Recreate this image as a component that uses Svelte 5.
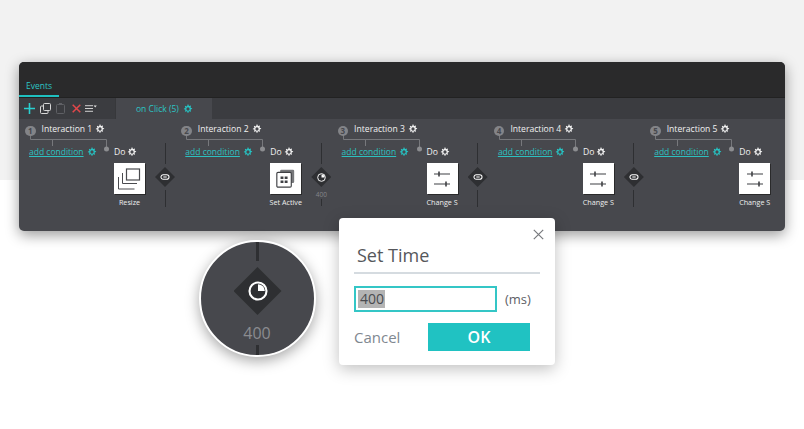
<script>
  const interactions = [
    { n: 1, tile: 'resize', label: 'Resize', link: 'link' },
    { n: 2, tile: 'active', label: 'Set Active', link: 'clock' },
    { n: 3, tile: 'sliders', label: 'Change S', link: 'link' },
    { n: 4, tile: 'sliders', label: 'Change S', link: 'link' },
    { n: 5, tile: 'sliders', label: 'Change S', link: null }
  ];
  const gearPath = 'M5 .6h1l.3 1.3.9.4 1.1-.7.7.7-.7 1.1.4.9 1.3.3v1l-1.3.3-.4.9.7 1.1-.7.7-1.1-.7-.9.4-.3 1.3H5l-.3-1.3-.9-.4-1.1.7-.7-.7.7-1.1-.4-.9L1 6V5l1.3-.3.4-.9-.7-1.1.7-.7 1.1.7.9-.4z';
</script>

{#snippet gear(cls)}
  <svg class="gear {cls}" viewBox="0 0 11 11" aria-hidden="true">
    <path fill-rule="evenodd" d="{gearPath} M5.5 3.700a1.800 1.800 0 1 0 0 3.600 1.800 1.800 0 0 0 0-3.600z" />
  </svg>
{/snippet}

{#snippet clock(size)}
  <svg width={size} height={size} viewBox="0 0 16 16" aria-hidden="true">
    <circle cx="8" cy="8" r="6.800" fill="none" stroke="#fff" stroke-width="1.700" />
    <path d="M8 8V2.500A5.500 5.500 0 0 1 13.500 8z" fill="#fff" />
  </svg>
{/snippet}

<main class="page">
  <section class="panel">
    <header class="tabs"><span class="tab">Events</span></header>

    <div class="toolbar">
      <div class="tools">
        <svg width="11" height="11" viewBox="0 0 11 11"><path d="M5.500 0v11M0 5.500h11" stroke="#2ad0d0" stroke-width="1.600" /></svg>
        <svg width="11" height="11" viewBox="0 0 11 11" fill="none" stroke="#d8d8d8" stroke-width="1"><rect x="3.500" y=".5" width="7" height="7" rx="1" /><path d="M3.500 3H1.500a1 1 0 0 0-1 1v5.500a1 1 0 0 0 1 1H7a1 1 0 0 0 1-1V7.500" /></svg>
        <svg width="9" height="11" viewBox="0 0 9 11" fill="none" stroke="#5f6065"><rect x=".5" y="1.500" width="8" height="9" rx="1" /><path d="M3 .5h3" /></svg>
        <svg class="del" width="9" height="9" viewBox="0 0 9 9"><path d="M.7.7l7.600 7.600M8.300.7L.7 8.300" stroke="#e2474a" stroke-width="1.500" /></svg>
        <svg class="menu" width="12" height="8" viewBox="0 0 12 8"><path d="M0 .7h8M0 3.500h8M0 6.300h8" stroke="#cfcfcf" /><path d="M8.600 .4h3.200L10.200 2.400z" fill="#e4e4e4" /></svg>
      </div>
      <div class="event-tab">on Click (5) {@render gear('teal')}</div>
    </div>

    <div class="flow">
      {#each interactions as item}
        <article class="interaction">
          <svg class="tree" width="90" height="32" viewBox="0 0 90 32" aria-hidden="true">
            <path d="M5.500 10V15.500H81.500V24M27.500 15.500V22" fill="none" stroke="#77787c" />
            <circle cx="81.500" cy="25" r="2.500" fill="#8c8d90" />
          </svg>

          <div class="left">
            <div class="head">
              <span class="badge">{item.n}</span>
              <span class="title">Interaction {item.n}</span>
              {@render gear('')}
            </div>
            <div class="cond">
              <a class="add" href="#cond">add condition</a>
              {@render gear('teal')}
            </div>
          </div>

          <div class="action">
            <div class="do">Do {@render gear('')}</div>
            <div class="tile">
              {#if item.tile === 'resize'}
                <svg width="25" height="22" viewBox="0 0 25 22" fill="none" stroke="#4a4b4f">
                  <rect x="9.500" y="1" width="13" height="11" stroke-width="1.200" />
                  <path d="M5.500 5V15.500H20" />
                  <path d="M1.500 9V21H17.500" />
                </svg>
              {:else if item.tile === 'active'}
                <svg width="19" height="19" viewBox="0 0 23 23">
                  <rect x="5" y="1" width="17" height="16" rx="1.500" fill="#77787b" />
                  <rect x="1" y="4" width="17.500" height="18" rx="1.500" fill="#fff" stroke="#3f4044" stroke-width="1.400" />
                  <path d="M5.500 9h3.500v3h-3.500zM10.500 9h3.500v3h-3.500zM5.500 14h3.500v3h-3.500zM10.500 14h3.500v3h-3.500z" fill="#3f4044" />
                </svg>
              {:else}
                <svg width="16" height="16" viewBox="0 0 16 16" stroke="#3f4044">
                  <path d="M0 3H16M0 13H16" stroke-width="1.200" />
                  <path d="M5 .5V5.500M12 10.500V15.500" stroke-width="1.600" />
                </svg>
              {/if}
            </div>
            <div class="tile-label">{item.label}</div>
          </div>

          {#if item.link}
            <div class="link">
              <span class="stem"></span>
              <span class="node">
                {#if item.link === 'link'}
                  <svg width="10" height="6" viewBox="0 0 11 7" fill="none" stroke="#fff" stroke-width="1.200"><rect x=".8" y=".8" width="9.400" height="5.400" rx="2.700" /><path d="M3.500 3.500h4" /></svg>
                {:else}
                  {@render clock(9)}
                {/if}
              </span>
              {#if item.link === 'clock'}
                <span class="delay">400</span>
                <span class="stem short"></span>
              {:else}
                <span class="stem low"></span>
              {/if}
            </div>
          {/if}
        </article>
      {/each}
    </div>
  </section>

  <div class="lens">
    <span class="lens-stem top"></span>
    <span class="lens-node">{@render clock(20)}</span>
    <span class="lens-time">400</span>
    <span class="lens-stem bottom"></span>
  </div>

  <div class="dialog" role="dialog" aria-label="Set Time">
    <button class="close" aria-label="Close">
      <svg width="11" height="11" viewBox="0 0 11 11"><path d="M.8.8l9.400 9.400M10.200.8L.8 10.200" stroke="#77797d" stroke-width="1.200" /></svg>
    </button>
    <h2>Set Time</h2>
    <div class="time-row">
      <div class="input"><span class="selected">400</span></div>
      <span class="unit">(ms)</span>
    </div>
    <div class="actions">
      <span class="cancel">Cancel</span>
      <button class="ok">OK</button>
    </div>
  </div>
</main>

<style>
  :global(body) {
    margin: 0;
    font-family: "Open Sans", "Liberation Sans", sans-serif;
  }

  .page {
    position: relative;
    width: 804px;
    height: 429px;
    overflow: hidden;
    padding: 62px 19px 0;
    box-sizing: border-box;
    background: linear-gradient(#f2f2f2 180px, #fff 180px);
  }

  .panel {
    width: 766px;
    height: 169px;
    border-radius: 5px;
    overflow: hidden;
    background: #47484d;
    box-shadow: 0 4px 14px rgba(0, 0, 0, 0.4);
  }

  .tabs {
    height: 35px;
    box-sizing: border-box;
    display: flex;
    align-items: flex-end;
    background: #2a2a2b;
  }

  .tab {
    width: 40px;
    height: 20px;
    padding: 2px 0 0 7px;
    box-sizing: border-box;
    border-bottom: 2px solid #1fc0c0;
    color: #2cc4c4;
    font-size: 8.500px;
    line-height: 14px;
  }

  .toolbar {
    height: 22px;
    display: flex;
    background: #3b3c40;
    border-top: 1px solid #222;
    box-sizing: border-box;
  }

  .tools {
    width: 96px;
    display: flex;
    align-items: center;
    gap: 5px;
    padding-left: 5px;
    box-sizing: border-box;
  }

  .del {
    margin-left: 2px;
  }

  .menu {
    margin-left: -1px;
  }

  .event-tab {
    width: 97px;
    box-sizing: border-box;
    padding-left: 20px;
    display: flex;
    align-items: center;
    gap: 4px;
    background: #47484d;
    border-left: 1px solid #37383b;
    color: #2cc4c4;
    font-size: 8.500px;
  }

  .flow {
    display: flex;
    padding-left: 6px;
  }

  .interaction {
    position: relative;
    flex: 0 0 156.300px;
    height: 112px;
    display: flex;
  }

  .tree {
    position: absolute;
    left: 0;
    top: 5px;
  }

  .left {
    position: relative;
    width: 89px;
  }

  .head {
    height: 19px;
    display: flex;
    align-items: center;
    gap: 3px;
    color: #f1f1f1;
    font-size: 8.600px;
  }

  .badge {
    width: 10.500px;
    height: 10.500px;
    margin: 5px 3px 0 0;
    border-radius: 50%;
    background: #838488;
    color: #47484d;
    font-size: 8px;
    font-weight: 700;
    line-height: 10.500px;
    text-align: center;
  }

  .gear {
    width: 10px;
    height: 10px;
    flex: none;
    fill: #f2f2f2;
  }

  .gear.teal {
    fill: #26c4c4;
  }

  .cond {
    margin: 7px 0 0 4px;
    display: flex;
    align-items: center;
    gap: 3px;
    font-size: 8.500px;
    line-height: 14px;
  }

  .add {
    color: #2cc0c0;
  }

  .action {
    position: relative;
    width: 39px;
    padding-top: 26px;
  }

  .do {
    display: flex;
    align-items: center;
    gap: 2px;
    color: #f1f1f1;
    font-size: 8.600px;
    line-height: 14px;
  }

  .tile {
    width: 31px;
    height: 31px;
    margin-top: 4px;
    display: flex;
    align-items: center;
    justify-content: center;
    background: #fff;
    box-shadow: 1px 1px 0 #2a2a2b;
  }

  .tile-label {
    width: 31px;
    margin-top: 2px;
    display: flex;
    justify-content: center;
    color: #eee;
    font-size: 7.200px;
    line-height: 12px;
    white-space: nowrap;
  }

  .link {
    width: 24px;
    padding-top: 24px;
    display: flex;
    flex-direction: column;
    align-items: center;
  }

  .stem {
    width: 1px;
    height: 21px;
    background: #2e2f32;
    flex: none;
  }

  .stem.low {
    height: 17px;
    margin-top: 3px;
  }

  .stem.short {
    height: 7px;
  }

  .node {
    width: 20px;
    height: 20px;
    margin-top: 3px;
    flex: none;
    display: flex;
    align-items: center;
    justify-content: center;
    background: #2e2f32;
    clip-path: polygon(50% 0, 100% 50%, 50% 100%, 0 50%);
  }

  .delay {
    margin-top: 3px;
    color: #85868a;
    font-size: 6.500px;
    line-height: 9px;
  }

  .lens {
    position: absolute;
    left: 199px;
    top: 240px;
    width: 117px;
    height: 117px;
    box-sizing: border-box;
    border: 2px solid #fff;
    border-radius: 50%;
    overflow: hidden;
    background: #47484d;
    box-shadow: 0 4px 14px rgba(0, 0, 0, 0.35);
  }

  .lens-stem {
    position: absolute;
    left: 55px;
    width: 3px;
    background: #2e2f32;
  }

  .lens-stem.top {
    top: 0;
    height: 19px;
  }

  .lens-stem.bottom {
    bottom: 0;
    height: 10px;
  }

  .lens-node {
    position: absolute;
    left: 32.500px;
    top: 25px;
    width: 48px;
    height: 48px;
    display: flex;
    align-items: center;
    justify-content: center;
    background: #2e2f32;
    clip-path: polygon(50% 0, 100% 50%, 50% 100%, 0 50%);
  }

  .lens-time {
    position: absolute;
    left: -1px;
    right: 0;
    top: 81px;
    color: #8b8c90;
    font-size: 16px;
    line-height: 20px;
    text-align: center;
  }

  .dialog {
    position: absolute;
    left: 339px;
    top: 218px;
    width: 216px;
    height: 147px;
    box-sizing: border-box;
    padding: 0 15px;
    border-radius: 4px;
    background: #fff;
    box-shadow: 0 4px 16px rgba(0, 0, 0, 0.25);
  }

  .close {
    position: absolute;
    right: 11px;
    top: 11px;
    padding: 0;
    border: 0;
    background: none;
    line-height: 0;
  }

  h2 {
    margin: 0;
    height: 56px;
    box-sizing: border-box;
    padding: 25px 0 0 3px;
    border-bottom: 2px solid #d5dbe0;
    width: 186px;
    color: #55575b;
    font-size: 18px;
    font-weight: 400;
    line-height: 24px;
  }

  .time-row {
    margin-top: 12px;
    display: flex;
    align-items: center;
    gap: 8px;
  }

  .input {
    width: 143px;
    height: 26px;
    box-sizing: border-box;
    border: 2px solid #34c6c6;
    padding: 2px;
    display: flex;
  }

  .selected {
    width: 27px;
    padding-left: 2px;
    box-sizing: border-box;
    background: #b4b4b4;
    color: #4a4b4f;
    font-size: 14px;
    line-height: 18px;
  }

  .unit {
    color: #5d6066;
    font-size: 13px;
  }

  .actions {
    margin-top: 11px;
    display: flex;
    align-items: center;
    justify-content: space-between;
    width: 176px;
  }

  .cancel {
    color: #7f8890;
    font-size: 15px;
  }

  .ok {
    width: 102px;
    height: 28px;
    border: 0;
    padding: 0;
    background: #20c2c2;
    color: #fff;
    font: 600 16px "Open Sans", sans-serif;
  }
</style>
